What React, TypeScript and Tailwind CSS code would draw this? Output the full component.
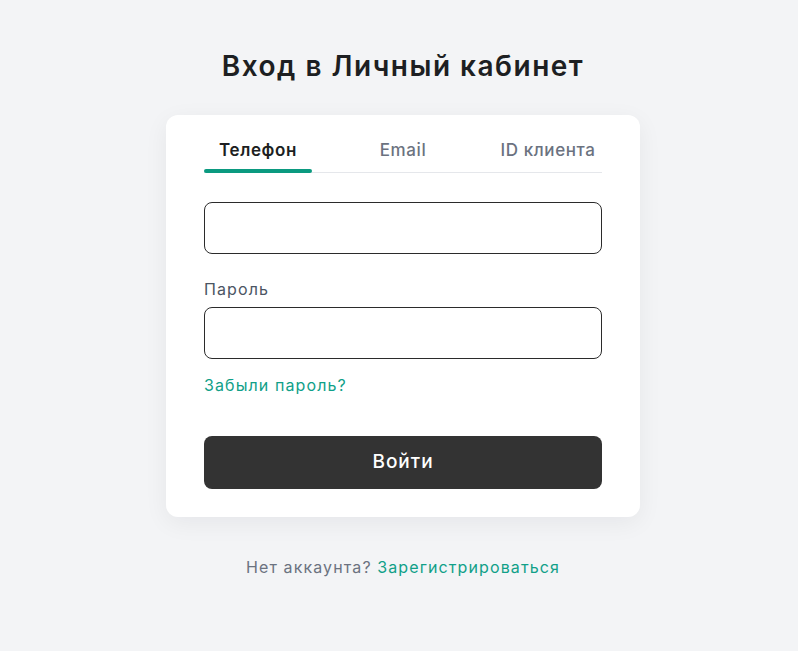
import { useState } from "react";

const tabs = ["Телефон", "Email", "ID клиента"];

export default function App() {
  const [active, setActive] = useState(0);

  return (
    <div className="min-h-screen bg-[#f3f4f6] flex flex-col items-center pt-[48px] pl-2 font-['Inter',_'Noto_Sans',_sans-serif]">
      <h1 className="text-[28px] leading-[36px] font-semibold text-[#1d1f22] tracking-[1.5px]">
        Вход в Личный кабинет
      </h1>

      {/* Login card */}
      <div className="mt-[31px] w-[474px] bg-white rounded-xl shadow-[0_6px_24px_rgba(17,24,39,0.06)] px-[38px] pt-[23px] pb-[28px]">
        <div className="flex justify-between border-b border-[#e5e7eb]">
          {tabs.map((t, i) => (
            <button
              key={t}
              onClick={() => setActive(i)}
              className={`relative w-[108px] h-[34px] flex justify-center items-start text-[17px] leading-6 tracking-[0.6px] ${
                i === active ? "font-semibold text-[#1d1f22]" : "font-medium text-[#6b7280]"
              }`}
            >
              {t}
              {i === active && (
                <span className="absolute left-0 right-0 bottom-[-1px] h-[4px] rounded-full bg-[#0b9a80]" />
              )}
            </button>
          ))}
        </div>

        <input className="mt-[29px] block w-full h-[52px] rounded-lg border border-[#2b2b2b] px-4 text-base outline-none" />

        <label className="mt-[23px] block text-base leading-6 tracking-[1.1px] text-[#4b5563]">Пароль</label>
        <input
          type="password"
          className="mt-[6px] block w-full h-[52px] rounded-lg border border-[#2b2b2b] px-4 text-base outline-none"
        />

        <a href="#" className="mt-[14px] block w-fit text-base leading-6 tracking-[1.1px] text-[#10a088]">
          Забыли пароль?
        </a>

        <button className="mt-[39px] w-full h-[53px] rounded-lg bg-[#333333] text-white text-[19px] font-medium tracking-[1px]">
          Войти
        </button>
      </div>

      <p className="mt-[38px] text-base leading-6 tracking-[1.1px] text-[#6b7280]">
        Нет аккаунта? <a href="#" className="text-[#10a088]">Зарегистрироваться</a>
      </p>
    </div>
  );
}
